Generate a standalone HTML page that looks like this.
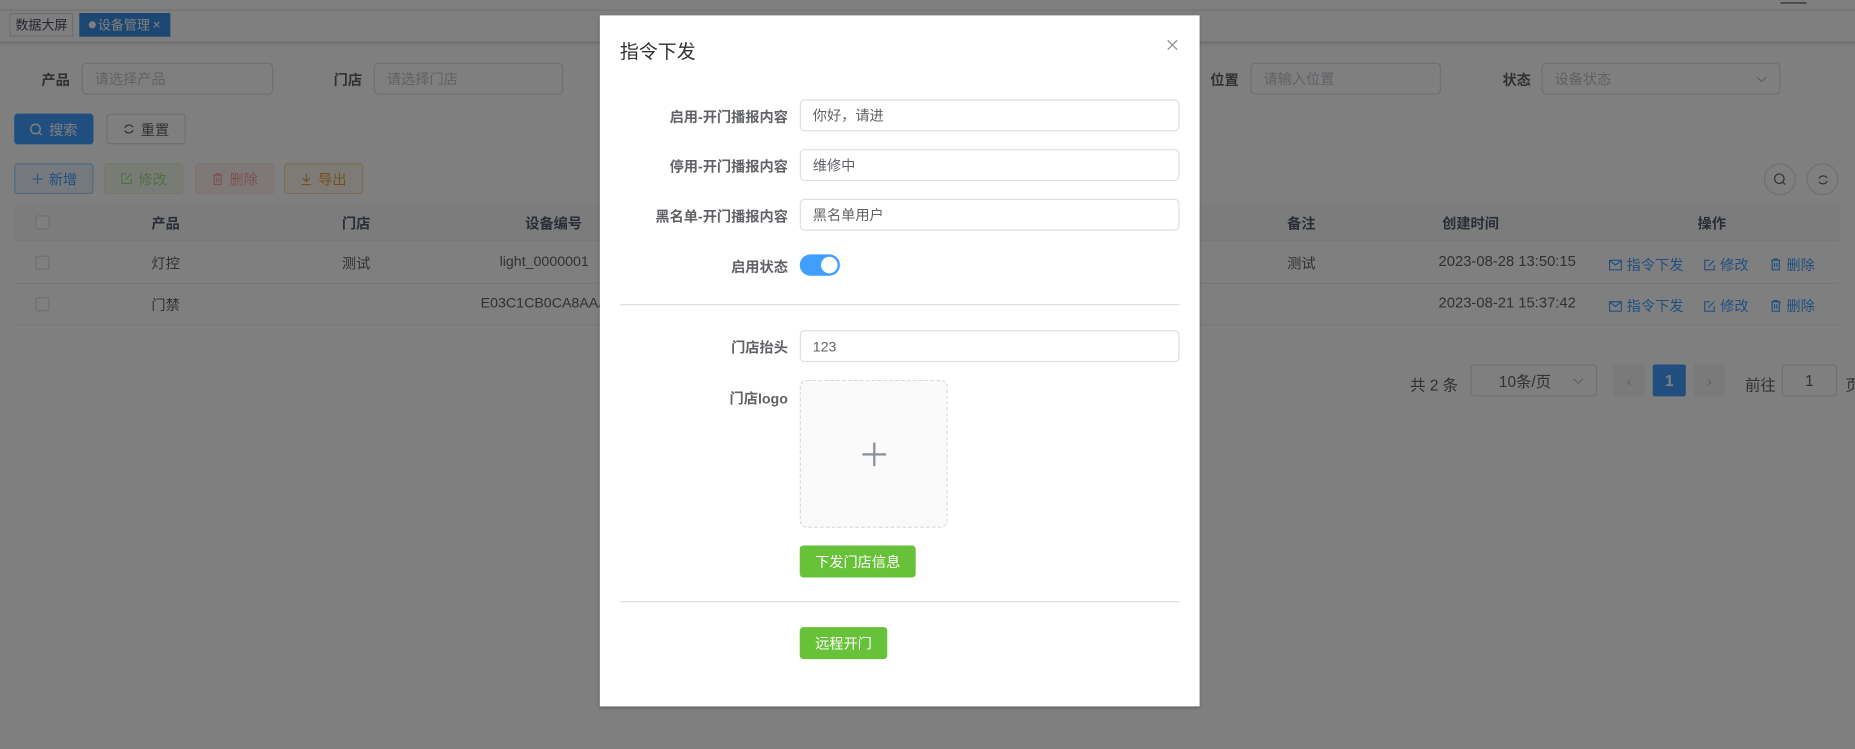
<!DOCTYPE html>
<html><head><meta charset="utf-8">
<style>
*{box-sizing:border-box;margin:0;padding:0}
html,body{width:1855px;height:749px;overflow:hidden;background:#fff}
body{font-family:"Liberation Sans","Noto Sans CJK SC",sans-serif;color:#606266}
#w{position:absolute;left:0;top:0;width:1568px;height:633px;transform:scale(1.18304,1.1833);transform-origin:0 0;background:#fff}
.a{position:absolute}
.inp{position:absolute;border:1px solid #dcdfe6;border-radius:4px;background:#fff;font-size:12px;color:#c0c4cc;padding-left:10px;display:flex;align-items:center}
.lbl{position:absolute;font-size:12px;font-weight:bold;color:#606266}
.btn{position:absolute;border-radius:3px;font-size:12px;display:flex;align-items:center;justify-content:center;gap:5px}
.th{position:absolute;top:180px;font-size:12px;font-weight:bold;color:#515a6e;transform:translateX(-50%)}
.td{position:absolute;font-size:12px;color:#606266;transform:translateX(-50%)}
.cb{position:absolute;left:30px;width:12px;height:12px;border:1px solid #dcdfe6;border-radius:2px;background:#fff}
.op{position:absolute;font-size:12px;color:#409eff;display:flex;align-items:center;gap:4px}
.hl{position:absolute;left:12px;width:1543px;height:1px;background:#ebeef5}
#ov{position:absolute;left:0;top:0;width:1568px;height:633px;background:rgba(0,0,0,.5)}
#m{position:absolute;left:507px;top:13px;width:507px;height:584px;background:#fff;box-shadow:0 1px 3px rgba(0,0,0,.3)}
.ml{position:absolute;right:348px;font-size:12px;font-weight:bold;color:#606266;text-align:right;white-space:nowrap}
.mi{position:absolute;left:169px;width:321px;height:27px;border:1px solid #dcdfe6;border-radius:4px;font-size:12px;color:#606266;padding-left:10px;display:flex;align-items:center}
.gb{position:absolute;left:169px;height:27px;background:#67c23a;color:#fff;border-radius:3px;font-size:12px;display:flex;align-items:center;justify-content:center}
.dv{position:absolute;left:17px;width:473px;height:1px;background:#dcdfe6}
svg{display:block}
</style></head><body>
<div id="w">
<div class="a" style="left:0;top:0;width:1568px;height:9px;background:#fff;border-bottom:1px solid #e6e6e6"></div>
<div class="a" style="left:1505px;top:2px;width:22px;height:1px;background:#555"></div>
<div class="a" style="left:0;top:9px;width:1568px;height:27px;background:#fff;border-bottom:1px solid #d8dce5;box-shadow:0 1px 3px rgba(0,0,0,.12)"></div>
<div class="a" style="left:8px;top:11px;width:54px;height:20px;border:1px solid #d8dce5;font-size:11px;color:#495060;display:flex;align-items:center;justify-content:center">数据大屏</div>
<div class="a" style="left:67px;top:11px;width:77px;height:20px;background:#3a8ee6;font-size:11px;color:#fff;display:flex;align-items:center;justify-content:center;gap:2px"><span style="width:6px;height:6px;border-radius:50%;background:#fff;display:inline-block"></span>设备管理 <span style="font-size:9px">✕</span></div>
<div class="lbl" style="left:35px;top:59px">产品</div>
<div class="inp" style="left:69px;top:53px;width:162px;height:27px">请选择产品</div>
<div class="lbl" style="left:282px;top:59px">门店</div>
<div class="inp" style="left:316px;top:53px;width:160px;height:27px">请选择门店</div>
<div class="lbl" style="left:1023px;top:59px">位置</div>
<div class="inp" style="left:1057px;top:53px;width:161px;height:27px">请输入位置</div>
<div class="lbl" style="left:1270px;top:59px">状态</div>
<div class="inp" style="left:1303px;top:53px;width:202px;height:27px">设备状态<svg style="position:absolute;right:10px" width="10" height="6" viewBox="0 0 10 6"><path d="M1 1l4 4 4-4" fill="none" stroke="#c0c4cc"/></svg></div>
<div class="btn" style="left:12px;top:96px;width:67px;height:26px;background:#409eff;color:#fff"><svg width="11" height="11" viewBox="0 0 11 11"><circle cx="5" cy="5" r="4" fill="none" stroke="#fff" stroke-width="1.2"/><path d="M8 8l2 2" stroke="#fff" stroke-width="1.2"/></svg>搜索</div>
<div class="btn" style="left:90px;top:96px;width:67px;height:26px;border:1px solid #dcdfe6;color:#606266"><svg width="10" height="10" viewBox="0 0 10 10"><path d="M8.5 3.5A4 4 0 0 0 1.5 4M1.5 6.5A4 4 0 0 0 8.5 6" fill="none" stroke="#606266"/></svg>重置</div>
<div class="btn" style="left:12px;top:138px;width:67px;height:26px;border:1px solid #a3d0fd;background:#ecf5ff;color:#409eff">＋ 新增</div>
<div class="btn" style="left:88px;top:138px;width:67px;height:26px;border:1px solid #e1f3d8;background:#f0f9eb;color:#a4da89"><svg width="10" height="10" viewBox="0 0 10 10"><path d="M5 1H1v8h8V5M4 6l5-5" fill="none" stroke="#a4da89"/></svg>修改</div>
<div class="btn" style="left:165px;top:138px;width:67px;height:26px;border:1px solid #fde2e2;background:#fef0f0;color:#f9a7a7"><svg width="10" height="11" viewBox="0 0 10 11"><path d="M1 2h8M3.5 2V1h3v1M2 2v8h6V2M4 4v4M6 4v4" fill="none" stroke="#f9a7a7"/></svg>删除</div>
<div class="btn" style="left:240px;top:138px;width:67px;height:26px;border:1px solid #f5dab1;background:#fdf6ec;color:#e6a23c"><svg width="10" height="11" viewBox="0 0 10 11"><path d="M5 1v6M2 4.5L5 7.5 8 4.5M1 10h8" fill="none" stroke="#e6a23c"/></svg>导出</div>
<div class="a" style="left:1491px;top:138px;width:27px;height:27px;border:1px solid #dcdfe6;border-radius:50%;display:flex;align-items:center;justify-content:center"><svg width="11" height="11" viewBox="0 0 11 11"><circle cx="5" cy="5" r="4" fill="none" stroke="#606266"/><path d="M8 8l2 2" stroke="#606266"/></svg></div>
<div class="a" style="left:1527px;top:138px;width:27px;height:27px;border:1px solid #dcdfe6;border-radius:50%;display:flex;align-items:center;justify-content:center"><svg width="10" height="10" viewBox="0 0 10 10"><path d="M8.5 3.5A4 4 0 0 0 1.5 4M1.5 6.5A4 4 0 0 0 8.5 6" fill="none" stroke="#606266"/></svg></div>
<div class="a" style="left:12px;top:172px;width:1543px;height:31px;background:#f8f8f9"></div>
<div class="cb" style="top:182px"></div>
<div class="th" style="left:140px">产品</div><div class="th" style="left:301px">门店</div><div class="th" style="left:468px">设备编号</div>
<div class="th" style="left:1100px">备注</div><div class="th" style="left:1243px">创建时间</div><div class="th" style="left:1447px">操作</div>
<div class="hl" style="top:203px"></div>
<div class="cb" style="top:216px"></div>
<div class="td" style="left:140px;top:214px">灯控</div><div class="td" style="left:301px;top:214px">测试</div><div class="td" style="left:460px;top:214px">light_0000001</div>
<div class="td" style="left:1100px;top:214px">测试</div><div class="td" style="left:1274px;top:214px;font-size:12.5px">2023-08-28 13:50:15</div>
<div class="op" style="left:1360px;top:215px"><svg width="11" height="10" viewBox="0 0 11 10"><path d="M.5 1h10v8H.5zM.5 1l5 4 5-4" fill="none" stroke="#409eff"/></svg>指令下发</div>
<div class="op" style="left:1440px;top:215px"><svg width="10" height="10" viewBox="0 0 10 10"><path d="M5 1H1v8h8V5M4 6l5-5" fill="none" stroke="#409eff"/></svg>修改</div>
<div class="op" style="left:1496px;top:215px"><svg width="10" height="11" viewBox="0 0 10 11"><path d="M1 2h8M3.5 2V1h3v1M2 2v8h6V2M4 4v4M6 4v4" fill="none" stroke="#409eff"/></svg>删除</div>
<div class="hl" style="top:239px"></div>
<div class="cb" style="top:251px"></div>
<div class="td" style="left:140px;top:249px">门禁</div><div class="td" style="left:460px;top:249px">E03C1CB0CA8AAA</div>
<div class="td" style="left:1274px;top:249px;font-size:12.5px">2023-08-21 15:37:42</div>
<div class="op" style="left:1360px;top:250px"><svg width="11" height="10" viewBox="0 0 11 10"><path d="M.5 1h10v8H.5zM.5 1l5 4 5-4" fill="none" stroke="#409eff"/></svg>指令下发</div>
<div class="op" style="left:1440px;top:250px"><svg width="10" height="10" viewBox="0 0 10 10"><path d="M5 1H1v8h8V5M4 6l5-5" fill="none" stroke="#409eff"/></svg>修改</div>
<div class="op" style="left:1496px;top:250px"><svg width="10" height="11" viewBox="0 0 10 11"><path d="M1 2h8M3.5 2V1h3v1M2 2v8h6V2M4 4v4M6 4v4" fill="none" stroke="#409eff"/></svg>删除</div>
<div class="hl" style="top:274px"></div>
<div class="a" style="left:1192px;top:315px;font-size:13px">共 2 条</div>
<div class="a" style="left:1243px;top:308px;width:107px;height:27px;border:1px solid #dcdfe6;border-radius:3px;font-size:13px;padding-left:23px;display:flex;align-items:center">10条/页<svg style="position:absolute;right:10px" width="10" height="6" viewBox="0 0 10 6"><path d="M1 1l4 4 4-4" fill="none" stroke="#c0c4cc"/></svg></div>
<div class="a" style="left:1364px;top:308px;width:26px;height:27px;background:#f4f4f5;color:#c0c4cc;font-size:12px;display:flex;align-items:center;justify-content:center">‹</div>
<div class="a" style="left:1397px;top:308px;width:28px;height:27px;background:#409eff;color:#fff;font-size:13px;font-weight:bold;display:flex;align-items:center;justify-content:center;border-radius:2px">1</div>
<div class="a" style="left:1432px;top:308px;width:26px;height:27px;background:#f4f4f5;color:#c0c4cc;font-size:12px;display:flex;align-items:center;justify-content:center">›</div>
<div class="a" style="left:1475px;top:315px;font-size:13px">前往</div>
<div class="a" style="left:1506px;top:308px;width:47px;height:27px;border:1px solid #dcdfe6;border-radius:3px;font-size:13px;display:flex;align-items:center;justify-content:center">1</div>
<div class="a" style="left:1560px;top:315px;font-size:13px">页</div>

<div id="ov"></div>
<div id="m">
<div class="a" style="left:17px;top:17px;font-size:16px;color:#303133">指令下发</div>
<svg class="a" style="left:479px;top:20px" width="10" height="10" viewBox="0 0 10 10"><path d="M1 1l8 8M9 1l-8 8" stroke="#909399" stroke-width="1.1"/></svg>
<div class="ml" style="top:77px">启用-开门播报内容</div><div class="mi" style="top:71px">你好，请进</div>
<div class="ml" style="top:119px">停用-开门播报内容</div><div class="mi" style="top:113px">维修中</div>
<div class="ml" style="top:161px">黑名单-开门播报内容</div><div class="mi" style="top:155px">黑名单用户</div>
<div class="ml" style="top:204px">启用状态</div>
<div class="a" style="left:169px;top:202px;width:34px;height:18px;border-radius:9px;background:#409eff"><div class="a" style="left:18px;top:2px;width:14px;height:14px;border-radius:50%;background:#fff"></div></div>
<div class="dv" style="top:244px"></div>
<div class="ml" style="top:272px">门店抬头</div><div class="mi" style="top:266px">123</div>
<div class="ml" style="top:315px">门店logo</div>
<div class="a" style="left:169px;top:308px;width:125px;height:125px;border:1px dashed #d9d9d9;border-radius:6px;background:#fafafa"><div class="a" style="left:52px;top:61px;width:20px;height:1.5px;background:#8c939d"></div><div class="a" style="left:61px;top:52px;width:1.5px;height:20px;background:#8c939d"></div></div>
<div class="gb" style="top:448px;width:98px">下发门店信息</div>
<div class="dv" style="top:495px"></div>
<div class="gb" style="top:517px;width:74px">远程开门</div>
</div>
</div>
</body></html>
